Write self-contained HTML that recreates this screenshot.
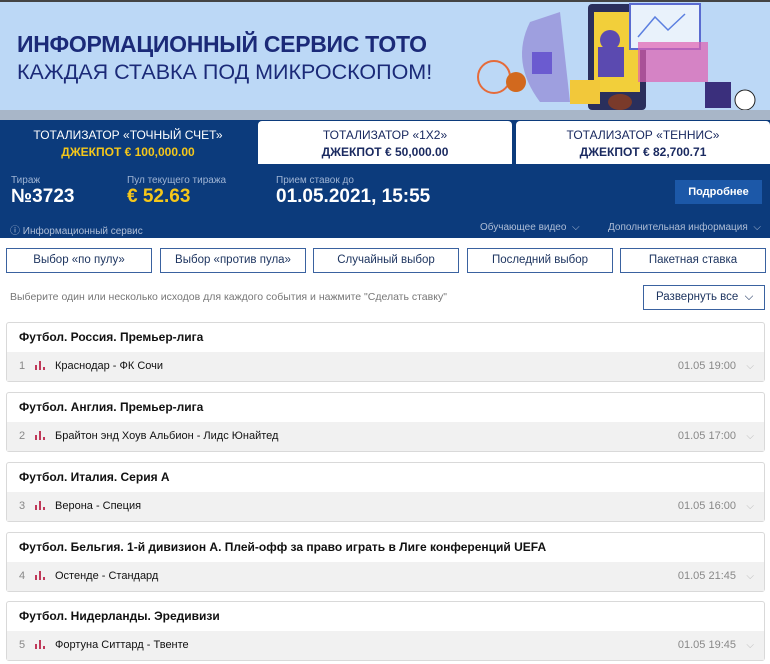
<!DOCTYPE html>
<html><head><meta charset="utf-8"><style>
*{box-sizing:border-box;margin:0;padding:0}
body{width:770px;height:664px;overflow:hidden;background:#fff;font-family:"Liberation Sans",Arial,sans-serif;position:relative}
.abs{position:absolute}
.banner{left:0;top:0;width:770px;height:112px;background:#bcd8f6;border-top:2px solid #444}
.t1{left:17px;top:31px;font-size:23px;font-weight:bold;color:#1b2a78;letter-spacing:-0.3px}
.t2{left:17px;top:60px;font-size:21.5px;color:#1b2a78}
.strip{left:0;top:110px;width:770px;height:12px;background:#a8b6c8}
.hdr{left:0;top:120px;width:770px;height:118px;background:#0c3b7c}
.tab{top:121px;height:43px;background:#fff;text-align:center;color:#1a2a60;font-size:12px}
.tab .a{margin-top:7px}
.tab .b{font-weight:bold;margin-top:3px}
.lab{font-size:10px;color:#9fb4d4}
.val{font-size:19px;font-weight:bold;color:#fff}
.btn{top:248px;height:25px;border:1px solid #3a62a0;color:#1e3560;font-size:11.5px;text-align:center;line-height:23px;background:#fff}
.card{left:6px;width:759px;height:60px;border:1px solid #d9d9d9;border-radius:3px;background:#fff}
.card .h{height:29px;line-height:29px;padding-left:12px;font-size:12px;font-weight:bold;color:#111}
.card .r{height:29px;line-height:29px;background:#f1f1f1;font-size:11px;color:#111;position:relative;padding-left:12px}
.num{color:#888;display:inline-block;width:16px}
.ic{display:inline-block;width:12px;height:9px;position:relative;margin-right:8px;vertical-align:-1px}
.ic i{position:absolute;bottom:0;width:2px;background:#c0395a}
.tm{position:absolute;right:28px;top:0;color:#888}
.ch{position:absolute;right:10px;top:0;color:#bbb;font-size:10px}
</style></head><body>
<div class="abs banner"></div>
<div class="abs t1">ИНФОРМАЦИОННЫЙ СЕРВИС ТОТО</div>
<div class="abs t2">КАЖДАЯ СТАВКА ПОД МИКРОСКОПОМ!</div>
<svg class="abs" style="left:470px;top:2px" width="300" height="108">
<path d="M60 20 Q40 60 70 100 L100 100 L90 10Z" fill="#8a7ad0" opacity=".6"/>
<rect x="118" y="2" width="58" height="106" rx="4" fill="#2a2f5c"/>
<rect x="124" y="10" width="46" height="80" fill="#f2cf3a"/>
<rect x="160" y="2" width="70" height="45" fill="#e9f2fb" stroke="#5a6bd0" stroke-width="2"/>
<polyline points="168,35 185,15 198,28 215,12" fill="none" stroke="#5b7fe0" stroke-width="1.5"/>
<rect x="168" y="40" width="70" height="40" fill="#e060b0" opacity=".7"/>
<circle cx="140" cy="38" r="10" fill="#5b4ab0"/>
<rect x="128" y="45" width="26" height="30" fill="#5b4ab0"/>
<circle cx="24" cy="75" r="16" fill="none" stroke="#e56b3a" stroke-width="2"/>
<circle cx="46" cy="80" r="10" fill="#d2691e"/>
<rect x="62" y="50" width="20" height="22" fill="#6b5bd0"/>
<rect x="100" y="78" width="30" height="24" fill="#f2c83a"/>
<ellipse cx="150" cy="100" rx="12" ry="8" fill="#7a3a2a"/>
<circle cx="275" cy="98" r="10" fill="#fff" stroke="#222"/>
<rect x="235" y="80" width="26" height="26" fill="#3a2f7c"/>
</svg>
<div class="abs strip"></div>
<div class="abs hdr"></div>
<div class="abs" style="left:0;top:120px;width:256px;height:46px;background:#0c3b7c;text-align:center;font-size:12px;color:#fff;border-radius:0 6px 0 0">
<div style="margin-top:8px">ТОТАЛИЗАТОР «ТОЧНЫЙ СЧЕТ»</div>
<div style="margin-top:3px;font-weight:bold;color:#f5c71a">ДЖЕКПОТ € 100,000.00</div></div>
<div class="abs tab" style="left:258px;width:254px;border-radius:4px 4px 0 0"><div class="a">ТОТАЛИЗАТОР «1X2»</div><div class="b">ДЖЕКПОТ € 50,000.00</div></div>
<div class="abs tab" style="left:516px;width:254px;border-radius:4px 4px 0 0"><div class="a">ТОТАЛИЗАТОР «ТЕННИС»</div><div class="b">ДЖЕКПОТ € 82,700.71</div></div>
<div class="abs lab" style="left:11px;top:175px">Тираж</div>
<div class="abs val" style="left:11px;top:186px">№3723</div>
<div class="abs lab" style="left:127px;top:175px">Пул текущего тиража</div>
<div class="abs val" style="left:127px;top:186px;color:#f5c71a">€ 52.63</div>
<div class="abs lab" style="left:276px;top:175px">Прием ставок до</div>
<div class="abs val" style="left:276px;top:186px">01.05.2021, 15:55</div>
<div class="abs" style="left:675px;top:180px;width:87px;height:24px;background:#1c58a8;color:#fff;font-size:11px;font-weight:bold;text-align:center;line-height:24px">Подробнее</div>
<div class="abs lab" style="left:10px;top:222px;color:#aebdd6">ⓘ Информационный сервис</div>
<div class="abs lab" style="left:480px;top:222px;color:#aebdd6">Обучающее видео &nbsp;⌵</div>
<div class="abs lab" style="left:608px;top:222px;color:#aebdd6">Дополнительная информация &nbsp;⌵</div>
<div class="abs btn" style="left:6px;width:146px">Выбор «по пулу»</div>
<div class="abs btn" style="left:160px;width:146px">Выбор «против пула»</div>
<div class="abs btn" style="left:313px;width:146px">Случайный выбор</div>
<div class="abs btn" style="left:467px;width:146px">Последний выбор</div>
<div class="abs btn" style="left:620px;width:146px">Пакетная ставка</div>
<div class="abs" style="left:10px;top:291px;font-size:10.5px;color:#777">Выберите один или несколько исходов для каждого события и нажмите "Сделать ставку"</div>
<div class="abs" style="left:643px;top:285px;width:122px;height:25px;border:1px solid #3a62a0;font-size:11.5px;color:#1e3560;line-height:23px;padding-left:12px">Развернуть все &nbsp;⌵</div>

<div class="abs card" style="top:322px"><div class="h">Футбол. Россия. Премьер-лига</div><div class="r"><span class="num">1</span><span class="ic"><i style="left:0;height:5px"></i><i style="left:4px;height:9px"></i><i style="left:8px;height:3px"></i></span>Краснодар - ФК Сочи<span class="tm">01.05 19:00</span><span class="ch">⌵</span></div></div>
<div class="abs card" style="top:392px"><div class="h">Футбол. Англия. Премьер-лига</div><div class="r"><span class="num">2</span><span class="ic"><i style="left:0;height:5px"></i><i style="left:4px;height:9px"></i><i style="left:8px;height:3px"></i></span>Брайтон энд Хоув Альбион - Лидс Юнайтед<span class="tm">01.05 17:00</span><span class="ch">⌵</span></div></div>
<div class="abs card" style="top:462px"><div class="h">Футбол. Италия. Серия А</div><div class="r"><span class="num">3</span><span class="ic"><i style="left:0;height:5px"></i><i style="left:4px;height:9px"></i><i style="left:8px;height:3px"></i></span>Верона - Специя<span class="tm">01.05 16:00</span><span class="ch">⌵</span></div></div>
<div class="abs card" style="top:532px"><div class="h">Футбол. Бельгия. 1-й дивизион А. Плей-офф за право играть в Лиге конференций UEFA</div><div class="r"><span class="num">4</span><span class="ic"><i style="left:0;height:5px"></i><i style="left:4px;height:9px"></i><i style="left:8px;height:3px"></i></span>Остенде - Стандард<span class="tm">01.05 21:45</span><span class="ch">⌵</span></div></div>
<div class="abs card" style="top:601px"><div class="h">Футбол. Нидерланды. Эредивизи</div><div class="r"><span class="num">5</span><span class="ic"><i style="left:0;height:5px"></i><i style="left:4px;height:9px"></i><i style="left:8px;height:3px"></i></span>Фортуна Ситтард - Твенте<span class="tm">01.05 19:45</span><span class="ch">⌵</span></div></div>
</body></html>
